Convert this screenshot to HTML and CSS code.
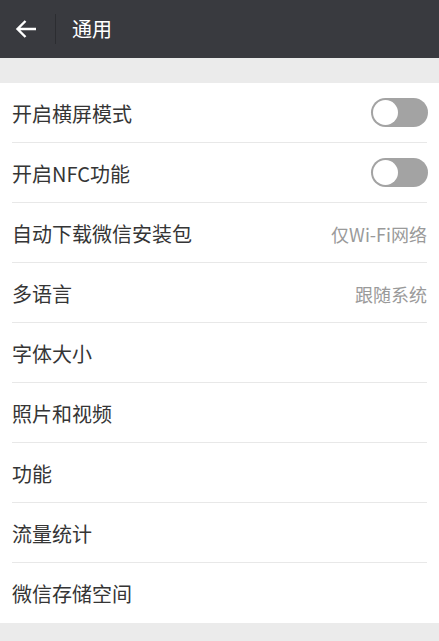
FILE: index.html
```html
<!DOCTYPE html>
<html lang="zh-CN">
<head>
<meta charset="utf-8">
<title>通用</title>
<link rel="stylesheet" href="styles.css">
</head>
<body>
<header class="topbar">
  <div class="back">
    <svg width="22" height="20" viewBox="0 0 22 20" aria-hidden="true">
      <path d="M21 10H2.5M10.5 2L2.5 10L10.5 18" fill="none" stroke="#ffffff" stroke-width="2.4" stroke-linecap="butt" stroke-linejoin="miter"/>
    </svg>
  </div>
  <div class="divider"></div>
  <h1 class="title">通用</h1>
</header>
<div class="gap"></div>
<ul class="list">
  <li class="row"><span class="label">开启横屏模式</span><span class="switch"><span class="knob"></span></span></li>
  <li class="row"><span class="label">开启NFC功能</span><span class="switch"><span class="knob"></span></span></li>
  <li class="row"><span class="label">自动下载微信安装包</span><span class="value">仅Wi-Fi网络</span></li>
  <li class="row"><span class="label">多语言</span><span class="value">跟随系统</span></li>
  <li class="row"><span class="label">字体大小</span></li>
  <li class="row"><span class="label">照片和视频</span></li>
  <li class="row"><span class="label">功能</span></li>
  <li class="row"><span class="label">流量统计</span></li>
  <li class="row last"><span class="label">微信存储空间</span></li>
</ul>
</body>
</html>
```

FILE: styles.css
```css
* { box-sizing: border-box; }
html, body {
  margin: 0;
  padding: 0;
  background: #ebebeb;
  font-family: "Noto Sans CJK SC", "Noto Sans", sans-serif;
}
.topbar {
  height: 58px;
  background: #393a3f;
  display: flex;
  align-items: center;
}
.back {
  width: 55px;
  height: 58px;
  display: flex;
  align-items: center;
  padding-left: 15px;
}
.back svg { display: block; }
.divider {
  width: 1px;
  height: 30px;
  background: #2c2d31;
}
.title {
  margin: 0 0 0 16px;
  font-size: 20px;
  font-weight: normal;
  color: #ffffff;
  line-height: 1;
}
.gap { height: 25px; }
.list {
  list-style: none;
  margin: 0;
  padding: 0 12px;
  background: #ffffff;
}
.row {
  height: 60px;
  border-bottom: 1px solid #e8e8e8;
  display: flex;
  align-items: center;
  justify-content: space-between;
  padding-top: 2px;
}
.row.last { border-bottom: none; }
.label {
  font-size: 20px;
  color: #353535;
  line-height: 1;
}
.value {
  font-size: 18px;
  color: #9a9a9a;
  line-height: 1;
}
.switch {
  width: 57px;
  height: 29px;
  border-radius: 15px;
  background: #a3a3a3;
  display: flex;
  align-items: center;
  padding-left: 2px;
  margin-right: -1px;
  margin-top: -3px;
}
.knob {
  width: 25px;
  height: 25px;
  border-radius: 50%;
  background: #ffffff;
}
```
